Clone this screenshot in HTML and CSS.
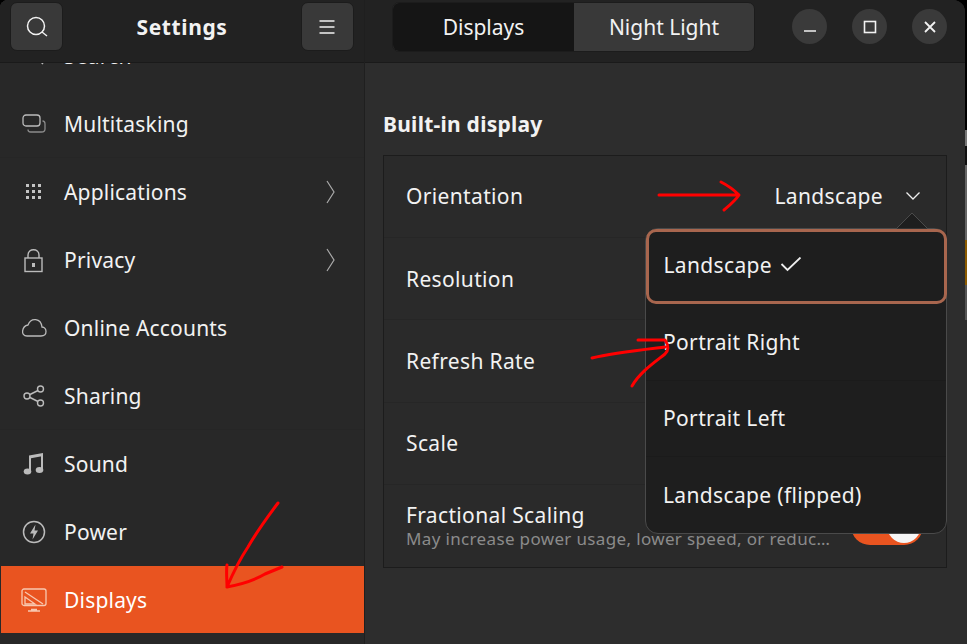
FILE: index.html
```html
<!DOCTYPE html>
<html lang="en">
<head>
  <meta charset="UTF-8">
  <meta name="viewport" content="width=device-width, initial-scale=1.0">
  <title>Settings</title>
  <link rel="stylesheet" href="styles.css">
</head>
<body>
  <div class="window">
    <!-- left pane -->
    <aside class="sidebar">
      <header class="side-head">
        <button class="tool-btn">
          <svg width="24" height="24" viewBox="0 0 24 24" fill="none" stroke="#f2f2f2" stroke-width="1.5"><circle cx="11" cy="11" r="8.500"/><path d="M17 17l5 4"/></svg>
        </button>
        <h1 class="app-title">Settings</h1>
        <button class="tool-btn">
          <svg width="18" height="16" viewBox="0 0 18 16" stroke="#f2f2f2" stroke-width="1.400"><path d="M1.500 2h15M1.500 8h15M1.500 14h15"/></svg>
        </button>
      </header>
      <nav class="side-list">
        <div class="side-row">
          <span class="side-icon">
            <svg width="24" height="24" viewBox="0 0 24 24" fill="none" stroke="#bbb" stroke-width="1.400"><circle cx="12" cy="10" r="8"/><path d="M17 16l4 4"/></svg>
          </span><span>Search</span>
        </div>
        <div class="side-row sep">
          <span class="side-icon">
            <svg width="24" height="20" viewBox="0 0 24 20" fill="none" stroke="#bbb" stroke-width="1.300"><rect x="1" y="1" width="17" height="11" rx="3"/><path d="M6 15.500c0 1.500 1 2.500 2.500 2.500h11c2 0 3.500-1 3.500-3v-5c0-2-1-3-2.500-3" stroke="#8a8a8a"/></svg>
          </span><span>Multitasking</span>
        </div>
        <div class="side-row">
          <span class="side-icon">
            <svg width="16" height="16" viewBox="0 0 16 16" fill="#c4c4c4"><rect x="0" y="0" width="3" height="3"/><rect x="6" y="0" width="3" height="3"/><rect x="12" y="0" width="3" height="3"/><rect x="0" y="6" width="3" height="3"/><rect x="6" y="6" width="3" height="3"/><rect x="12" y="6" width="3" height="3"/><rect x="0" y="12" width="3" height="3"/><rect x="6" y="12" width="3" height="3"/><rect x="12" y="12" width="3" height="3"/></svg>
          </span><span>Applications</span>
          <svg class="chevron" width="10" height="24" viewBox="0 0 10 24" fill="none" stroke="#aaa" stroke-width="1.200"><path d="M1 1l7 11-7 11"/></svg>
        </div>
        <div class="side-row">
          <span class="side-icon">
            <svg width="20" height="25" viewBox="0 0 20 25" fill="none" stroke="#bbb" stroke-width="1.400"><rect x="1" y="10" width="17" height="13.500"/><path d="M4 10V7c0-7 11-7 11 0v3"/><rect x="8" y="15" width="3" height="4" fill="#bbb" stroke="none"/></svg>
          </span><span>Privacy</span>
          <svg class="chevron" width="10" height="24" viewBox="0 0 10 24" fill="none" stroke="#aaa" stroke-width="1.200"><path d="M1 1l7 11-7 11"/></svg>
        </div>
        <div class="side-row">
          <span class="side-icon">
            <svg width="26" height="20" viewBox="0 0 26 20" fill="none" stroke="#bbb" stroke-width="1.300"><path d="M6 18h14c7 0 6-9 1-9-1-9-11-10-14-2C1 8-1 18 6 18z"/></svg>
          </span><span>Online Accounts</span>
        </div>
        <div class="side-row sep">
          <span class="side-icon">
            <svg width="24" height="24" viewBox="0 0 24 24" fill="none" stroke="#bbb" stroke-width="1.400"><circle cx="18.500" cy="5" r="3"/><circle cx="18.500" cy="19" r="3"/><circle cx="5" cy="12" r="3"/><path d="M8 10.500l8-4M8 13.500l8 4"/></svg>
          </span><span>Sharing</span>
        </div>
        <div class="side-row">
          <span class="side-icon">
            <svg width="22" height="24" viewBox="0 0 22 24" fill="#bbb"><path d="M6 3.500L20 1v3L8 6.200V19H6zM18 4h2v14h-2z"/><ellipse cx="4.500" cy="19.500" rx="3.800" ry="3"/><ellipse cx="16.500" cy="18" rx="3.800" ry="3"/></svg>
          </span><span>Sound</span>
        </div>
        <div class="side-row">
          <span class="side-icon">
            <svg width="24" height="24" viewBox="0 0 24 24"><circle cx="12" cy="12" r="10.500" fill="none" stroke="#bbb" stroke-width="1.500"/><path d="M13.500 4.500L8 13.500h3.500L10.500 19.500 16 10.500h-3.500z" fill="#bbb"/></svg>
          </span><span>Power</span>
        </div>
        <div class="side-row active">
          <span class="side-icon">
            <svg width="26" height="24" viewBox="0 0 26 24" fill="none" stroke="#f8c8b0" stroke-width="1.300"><rect x="1" y="1" width="24" height="16.500" rx="2"/><path d="M4 4l18 12M4 9l10 7H4z"/><path d="M10 21.500h6M7 23h12" stroke-width="1.600"/></svg>
          </span><span>Displays</span>
        </div>
      </nav>
    </aside>

    <!-- right pane -->
    <main class="main">
      <header class="main-head">
        <div class="switcher">
          <div class="switch-tab selected">Displays</div>
          <div class="switch-tab">Night Light</div>
        </div>
        <div class="win-controls">
          <button class="win-btn">
            <svg width="12" height="12" viewBox="0 0 12 12" stroke="#f2f2f2" stroke-width="1.300"><path d="M0 10h12"/></svg>
          </button>
          <button class="win-btn">
            <svg width="14" height="14" viewBox="0 0 14 14" fill="none" stroke="#f2f2f2" stroke-width="1.600"><rect x="1.500" y="1.500" width="11" height="11"/></svg>
          </button>
          <button class="win-btn">
            <svg width="12" height="12" viewBox="0 0 12 12" stroke="#f2f2f2" stroke-width="1.800"><path d="M1 1l10 10M11 1L1 11"/></svg>
          </button>
        </div>
      </header>
      <section class="content">
        <h2 class="group-title">Built-in display</h2>
        <div class="group-list">
          <div class="set-row">
            <span>Orientation</span>
            <span class="set-value">Landscape
              <svg width="16" height="10" viewBox="0 0 16 10" fill="none" stroke="#eee" stroke-width="1.300"><path d="M1.500 1.500L8 8l6.500-6.500"/></svg>
            </span>
          </div>
          <div class="set-row"><span>Resolution</span></div>
          <div class="set-row"><span>Refresh Rate</span></div>
          <div class="set-row"><span>Scale</span></div>
          <div class="set-row">
            <div class="set-text">
              <span>Fractional Scaling</span>
              <span class="set-sub">May increase power usage, lower speed, or reduc…</span>
            </div>
            <span class="toggle"><span class="knob"></span></span>
          </div>
        </div>
      </section>
    </main>

    <!-- orientation menu, open over the list -->
    <div class="popover">
      <svg class="pop-arrow" width="34" height="17" viewBox="0 0 34 17"><path d="M1 17L17 1l16 16z" fill="#1e1e1e" stroke="#4a4a4a"/></svg>
      <div class="pop-item current">Landscape
        <svg width="22" height="16" viewBox="0 0 22 16" fill="none" stroke="#eee" stroke-width="1.800"><path d="M1.500 7l6 6L20.500 .5"/></svg>
      </div>
      <div class="pop-item">Portrait Right</div>
      <div class="pop-item">Portrait Left</div>
      <div class="pop-item">Landscape (flipped)</div>
    </div>

    <!-- red marks drawn on the screenshot -->
    <svg class="marks" width="965" height="644" viewBox="0 0 965 644" fill="none" stroke="#f00" stroke-width="3" stroke-linecap="round" stroke-linejoin="round">
      <path d="M659 195c25 0 50 0 79 0M721 182c6 3 12 7 18 13-4 6-9 10-15 15"/>
      <path d="M592 358c20-5 48-8 73-11M638 340h27c4 6 4 10 0 14-10 8-25 18-33 32"/>
      <path d="M278 503c-12 16-22 30-30 44-8 12-15 26-21 40M227 565c-1 6 0 14 0 22 16-3 28-7 38-13l17-7"/>
    </svg>
  </div>
</body>
</html>
```

FILE: styles.css
```css
* {
  margin: 0;
  padding: 0;
  box-sizing: border-box;
}

html, body {
  height: 100%;
  overflow: hidden;
}

/* the body shows the bit of desktop at the right edge of the window */
body {
  font-family: 'Noto Sans', sans-serif;
  font-size: 21px;
  letter-spacing: 0.35px;
  color: #f2f2f2;
  background: linear-gradient(#000 130px, #777 130px, #777 146px, #111 146px, #111 165px, #666 165px, #666 240px, #8a5a00 240px, #8a5a00 285px, #555 285px, #555 320px, #2d2d2d 320px);
}

button {
  border: none;
  font: inherit;
  color: inherit;
}

.window {
  position: relative;
  display: flex;
  width: 965px;
  height: 644px;
  background: #2d2d2d;
  border-radius: 8px 12px 0 0;
  overflow: hidden;
}

/* left pane */
.sidebar {
  display: flex;
  flex-direction: column;
  flex: none;
  width: 365px;
  height: 100%;
  background: #282828;
  border-right: 1px solid #1f1f1f;
}

.side-head {
  display: flex;
  align-items: center;
  justify-content: space-between;
  flex: none;
  height: 63px;
  padding: 0 10px 9px 10px;
  background: #222;
  border-bottom: 1px solid #1a1a1a;
  z-index: 1;
}

.tool-btn {
  display: flex;
  align-items: center;
  justify-content: center;
  width: 53px;
  height: 49px;
  background: #393939;
  border: 1px solid #1c1c1c;
  border-radius: 7px;
}

.app-title {
  font-size: 21px;
  font-weight: 700;
  letter-spacing: 0.6px;
}

.side-list {
  flex: 1;
  min-height: 0;
  display: flex;
  flex-direction: column;
  justify-content: flex-end;
  padding-bottom: 11px;
  overflow: hidden;
  letter-spacing: 0.2px;
}

.side-row {
  display: flex;
  align-items: center;
  flex: none;
  height: 68px;
  padding-left: 20px;
}

.side-row.sep {
  border-bottom: 1px solid #262626;
}

.side-row.active {
  height: 67px;
  margin-left: 1px;
  padding-left: 19px;
  background: #e95420;
  color: #fff;
}

.side-icon {
  display: flex;
  align-items: center;
  justify-content: center;
  width: 27px;
  margin-right: 17px;
}

.chevron {
  margin-left: auto;
  margin-right: 28px;
}

/* right pane */
.main {
  flex: 1;
  display: flex;
  flex-direction: column;
  min-width: 0;
}

.main-head {
  display: flex;
  align-items: center;
  flex: none;
  height: 63px;
  padding: 0 18px 9px 27px;
  background: #222;
  border-bottom: 1px solid #1a1a1a;
}

.switcher {
  display: flex;
  width: 363px;
  height: 50px;
  border: 1px solid #1c1c1c;
  border-radius: 7px;
  overflow: hidden;
  background: #393939;
  letter-spacing: 0;
}

.switch-tab {
  flex: 1;
  display: flex;
  align-items: center;
  justify-content: center;
}

.switch-tab.selected {
  flex: none;
  width: 181px;
  background: #151515;
}

.win-controls {
  display: flex;
  gap: 25px;
  margin-left: auto;
}

.win-btn {
  display: flex;
  align-items: center;
  justify-content: center;
  width: 35px;
  height: 35px;
  border-radius: 50%;
  background: #3a3a3a;
}

.content {
  flex: 1;
  padding: 45px 18px 0 18px;
}

.group-title {
  font-size: 21px;
  font-weight: 700;
  letter-spacing: 0.25px;
  line-height: 32px;
  margin-bottom: 15px;
}

.group-list {
  background: #2a2a2a;
  border: 1px solid #1c1c1c;
}

.set-row {
  display: flex;
  align-items: center;
  justify-content: space-between;
  height: 82.200px;
  padding: 0 23px 0 22px;
  border-bottom: 1px solid #262626;
}

.set-row:first-child {
  padding-bottom: 2px;
}

.set-row:last-child {
  border-bottom: none;
}

.set-value {
  display: flex;
  align-items: center;
  gap: 22px;
  margin-right: 2px;
}

.set-text {
  display: flex;
  flex-direction: column;
  padding-top: 3px;
  line-height: 24px;
}

.set-sub {
  font-size: 17px;
  color: #8b8b8b;
}

.toggle {
  display: flex;
  justify-content: flex-end;
  align-items: center;
  width: 72px;
  height: 38px;
  padding: 2px;
  background: #e95420;
  border-radius: 19px;
}

.knob {
  width: 34px;
  height: 34px;
  background: #f5f5f5;
  border-radius: 50%;
}

/* orientation menu */
.popover {
  position: absolute;
  left: 645px;
  top: 228px;
  width: 302px;
  height: 306px;
  background: #1e1e1e;
  border: 1px solid #4a4a4a;
  border-radius: 13px;
}

.pop-arrow {
  position: absolute;
  left: 249px;
  top: -17px;
}

.pop-item {
  display: flex;
  align-items: center;
  gap: 8px;
  height: 76.500px;
  padding-left: 17px;
  border-bottom: 1px solid #1b1b1b;
}

.pop-item:last-child {
  border-bottom: none;
}

.pop-item.current {
  height: 75px;
  margin: 0 -0.500px;
  padding: 0 0 4px 15px;
  border: 3px solid #a8664e;
  border-radius: 10px;
}

.marks {
  position: absolute;
  left: 0;
  top: 0;
  pointer-events: none;
}
```
